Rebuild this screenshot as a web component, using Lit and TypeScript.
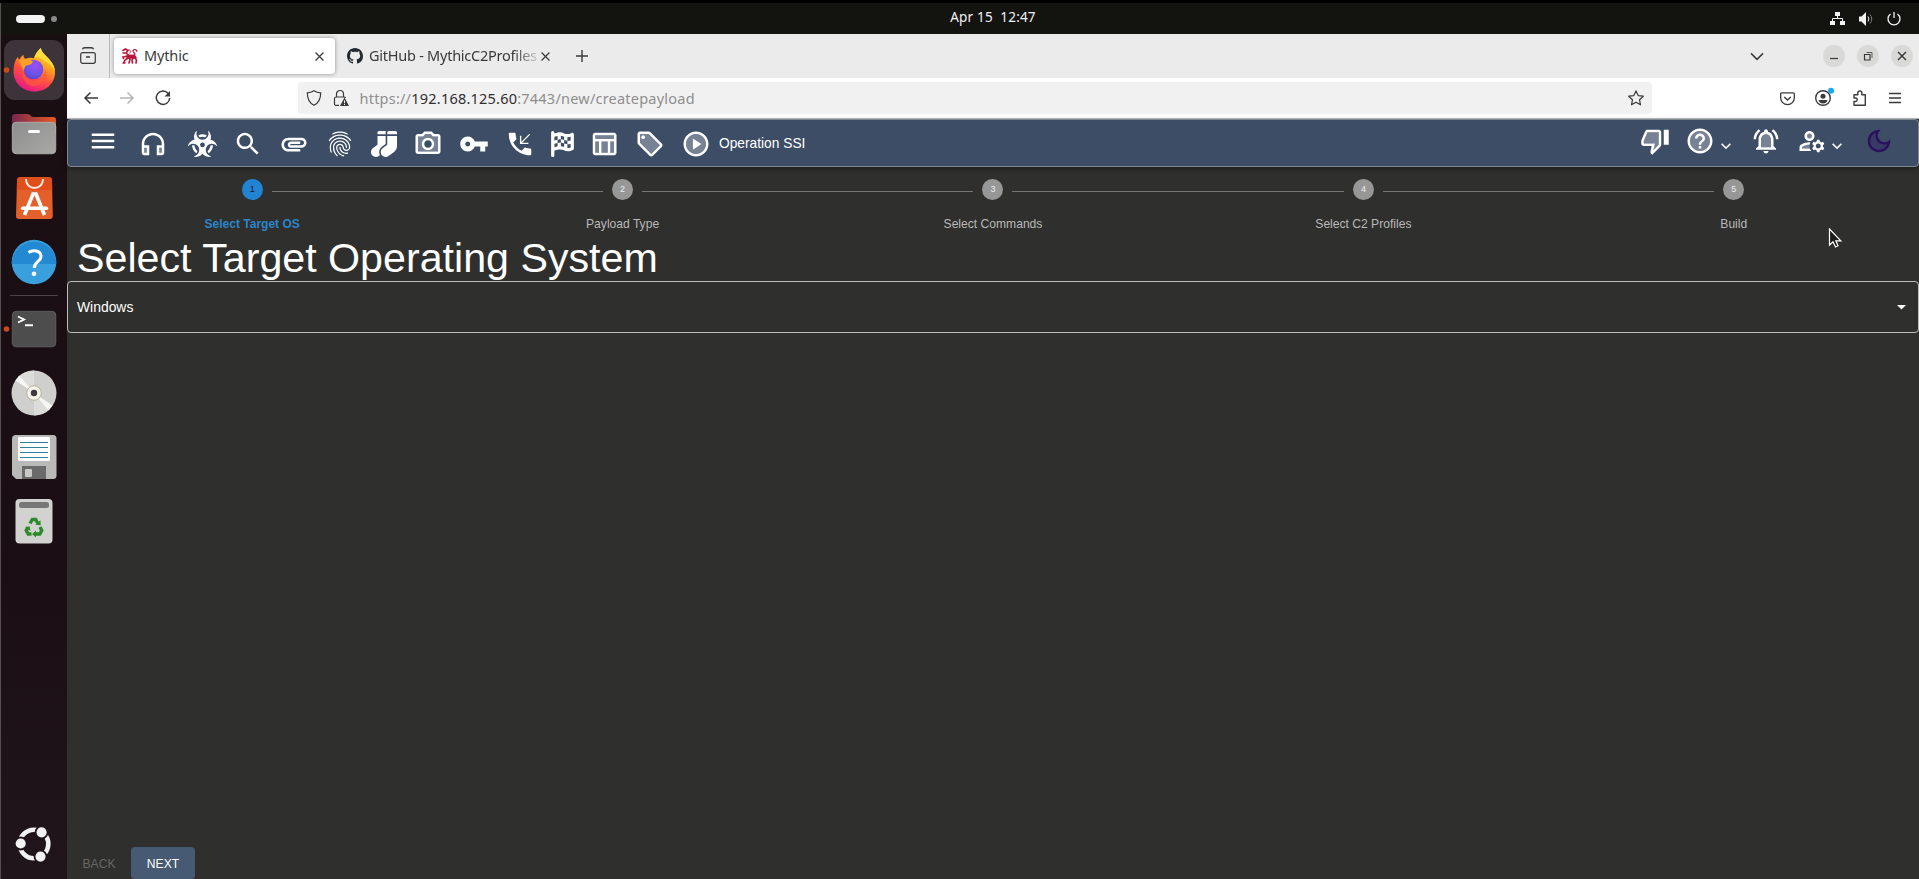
import { LitElement, html, svg, css, nothing } from "lit";
import { customElement } from "lit/decorators.js";

type Glyph = { vb: string; w: number; h: number; body: unknown };

const mui = (body: unknown, size = 30): Glyph => ({ vb: "0 0 24 24", w: size, h: size, body });

const draw = (g: Glyph) =>
  html`<svg viewBox=${g.vb} width=${g.w} height=${g.h} fill="currentColor">${g.body}</svg>`;

const duo = (soft: string, solid: string) => svg`<path opacity=".3" d=${soft}/><path d=${solid}/>`;

const icons = {
  menu: mui(svg`<path d="M3 18h18v-2H3v2zm0-5h18v-2H3v2zm0-7v2h18V6H3z"/>`),
  headphones: mui(duo("M5 15h2v4H5zM17 15h2v4h-2z", "M12 3c-4.97 0-9 4.03-9 9v7c0 1.1.9 2 2 2h4v-8H5v-1c0-3.87 3.13-7 7-7s7 3.13 7 7v1h-4v8h4c1.1 0 2-.9 2-2v-7c0-4.97-4.03-9-9-9zM7 15v4H5v-4h2zm12 4h-2v-4h2v4z")),
  biohazard: { vb: "0 0 576 512", w: 29, h: 26, body: svg`<path d="M287.9 112c18.6 0 36.2 3.8 52.8 9.6 13.3-10.3 23.6-24.3 29.5-40.7-25.2-10.9-53-17-82.2-17-29.1 0-56.9 6-82.1 16.9 5.9 16.4 16.2 30.4 29.5 40.7 16.5-5.7 34-9.5 52.5-9.5zM163.6 438.7c12-11.8 20.4-26.4 24.5-42.4-32.9-26.4-54.8-65.3-58.9-109.6-8.5-2.8-17.2-4.6-26.4-4.6-7.6 0-15.2 1-22.5 3.1 4.1 62.8 35.8 118 83.3 153.5zm224.2-42.6c4.1 16 12.5 30.7 24.5 42.5 47.4-35.5 79.1-90.7 83-153.5-7.2-2-14.7-3-22.2-3-9.2 0-18 1.9-26.6 4.7-4.1 44.2-26 82.9-58.7 109.3zm113.5-205c-17.6-10.4-36.3-16.6-55.3-19.9 6-17.7 10-36.4 10-56.2 0-41-14.5-80.8-41-112.2-2.5-3-6.6-3.7-10-1.8-3.3 1.9-4.8 6-3.6 9.7 4.5 13.8 6.6 26.3 6.6 38.5 0 67.8-53.8 122.9-120 122.9S168 117 168 49.2c0-12.1 2.2-24.7 6.6-38.5 1.2-3.7-.3-7.8-3.6-9.7-3.4-1.9-7.5-1.2-10 1.8C134.6 34.2 120 74 120 115c0 19.8 3.9 38.5 10 56.2-18.9 3.3-37.7 9.5-55.3 19.9-34.6 20.5-61 53.3-74.3 92.4-1.3 3.7.2 7.7 3.5 9.8 3.3 2 7.5 1.3 10-1.6 9.4-10.8 19-19.1 29.2-25.1 57.3-33.9 130.8-13.7 163.9 45 33.1 58.7 13.4 134-43.9 167.9-10.2 6.1-22 10.4-35.8 13.4-3.7.8-6.4 4.2-6.4 8.1.1 4 2.7 7.3 6.5 8 39.7 7.8 80.6.8 115.2-19.7 18-10.6 32.9-24.5 45.3-40.1 12.4 15.6 27.3 29.5 45.3 40.1 34.6 20.5 75.5 27.5 115.2 19.7 3.8-.7 6.4-4 6.5-8 0-3.9-2.6-7.3-6.4-8.1-13.9-2.9-25.6-7.3-35.8-13.4-57.3-33.9-77-109.2-43.9-167.9s106.6-78.9 163.9-45c10.2 6.1 19.8 14.3 29.2 25.1 2.5 2.9 6.7 3.6 10 1.6s4.8-6.1 3.5-9.8c-13.1-39.1-39.5-72-74.1-92.4zm-213.4 129c-26.5 0-48-21.5-48-48s21.5-48 48-48 48 21.5 48 48-21.5 48-48 48z"/>` },
  search: mui(svg`<path d="M15.5 14h-.79l-.28-.27C15.41 12.59 16 11.11 16 9.5 16 5.91 13.09 3 9.5 3S3 5.91 3 9.5 5.91 16 9.5 16c1.61 0 3.09-.59 4.23-1.57l.27.28v.79l5 4.99L20.49 19l-4.99-5zm-6 0C7.01 14 5 11.99 5 9.5S7.01 5 9.5 5 14 7.01 14 9.5 11.99 14 9.5 14z"/>`),
  clip: mui(svg`<path d="M2 12.5C2 9.46 4.46 7 7.5 7H18c2.21 0 4 1.79 4 4s-1.79 4-4 4H9.5C8.12 15 7 13.88 7 12.5S8.12 10 9.5 10H17v2H9.41c-.55 0-.55 1 0 1H18c1.1 0 2-.9 2-2s-.9-2-2-2H7.5C5.57 9 4 10.57 4 12.5S5.57 16 7.5 16H17v2H7.5C4.46 18 2 15.54 2 12.5z"/>`),
  fingerprint: mui(svg`<path d="M17.81 4.47c-.08 0-.16-.02-.23-.06C15.66 3.42 14 3 12.01 3c-1.98 0-3.86.47-5.57 1.41-.24.13-.54.04-.68-.2-.13-.24-.04-.55.2-.68C7.82 2.52 9.86 2 12.01 2c2.13 0 3.99.47 6.03 1.52.25.13.34.43.21.67-.09.18-.26.28-.44.28zM3.5 9.72c-.1 0-.2-.03-.29-.09-.23-.16-.28-.47-.12-.7.99-1.4 2.25-2.5 3.75-3.27C9.98 4.04 14 4.03 17.15 5.65c1.5.77 2.76 1.86 3.75 3.25.16.22.11.54-.12.7-.23.16-.54.11-.7-.12-.9-1.26-2.04-2.25-3.39-2.94-2.87-1.47-6.54-1.47-9.4.01-1.36.7-2.5 1.7-3.4 2.96-.08.14-.23.21-.39.21zm6.25 12.07c-.13 0-.26-.05-.35-.15-.87-.87-1.34-1.43-2.01-2.64-.69-1.23-1.05-2.73-1.05-4.34 0-2.97 2.54-5.39 5.66-5.39s5.66 2.42 5.66 5.39c0 .28-.22.5-.5.5s-.5-.22-.5-.5c0-2.42-2.09-4.39-4.66-4.39-2.57 0-4.66 1.97-4.66 4.39 0 1.44.32 2.77.93 3.85.64 1.15 1.08 1.64 1.85 2.42.19.2.19.51 0 .71-.11.1-.24.15-.37.15zm7.17-1.85c-1.19 0-2.24-.3-3.1-.89-1.49-1.01-2.38-2.65-2.38-4.39 0-.28.22-.5.5-.5s.5.22.5.5c0 1.41.72 2.74 1.94 3.56.71.48 1.54.71 2.54.71.24 0 .64-.03 1.04-.1.27-.05.53.13.58.41.05.27-.13.53-.41.58-.57.11-1.07.12-1.21.12zM14.91 22c-.04 0-.09-.01-.13-.02-1.59-.44-2.63-1.03-3.72-2.1-1.4-1.39-2.17-3.24-2.17-5.22 0-1.62 1.38-2.94 3.08-2.94 1.7 0 3.08 1.32 3.08 2.94 0 1.07.93 1.94 2.08 1.94s2.08-.87 2.08-1.94c0-3.77-3.25-6.83-7.25-6.83-2.84 0-5.44 1.58-6.61 4.03-.39.81-.59 1.76-.59 2.8 0 .78.07 2.01.67 3.61.1.26-.03.55-.29.64-.26.1-.55-.04-.64-.29-.49-1.31-.73-2.61-.73-3.96 0-1.2.23-2.29.68-3.24 1.33-2.79 4.28-4.6 7.51-4.6 4.55 0 8.25 3.51 8.25 7.83 0 1.62-1.38 2.94-3.08 2.94s-3.08-1.32-3.08-2.94c0-1.07-.93-1.94-2.08-1.94s-2.08.87-2.08 1.94c0 1.71.66 3.31 1.87 4.51.95.94 1.86 1.46 3.27 1.85.27.07.42.35.35.61-.05.23-.26.38-.47.38z"/>`),
  socks: { vb: "0 0 512 512", w: 26, h: 26, body: svg`<path d="M214.66 311.01L288 256V96H128v176l-86.65 64.61c-39.4 29.56-53.86 84.42-29.21 127.06C30.39 495.25 63.27 512 96.08 512c20.03 0 40.25-6.25 57.52-19.2l21.86-16.39c-29.85-55.38-13.54-125.84 39.2-165.4zM288 32c0-11.05 3.07-21.3 8.02-30.38C293.4.92 290.85 0 288 0H160c-17.67 0-32 14.33-32 32v32h160V32zM480 0H352c-17.67 0-32 14.33-32 32v32h192V32c0-17.67-14.33-32-32-32zM320 272l-86.13 64.61c-39.4 29.56-53.86 84.42-29.21 127.06 18.25 31.58 50.61 48.33 83.42 48.33 20.03 0 40.25-6.25 57.52-19.2l115.2-86.4A127.997 127.997 0 0 0 512 304V96H320v176z"/>` },
  camera: mui(duo("M20 6h-4.05l-1.83-2H9.88L8.05 6H4v12h16V6zm-8 11c-2.76 0-5-2.24-5-5s2.24-5 5-5 5 2.24 5 5-2.24 5-5 5z", "M20 4h-3.17L15 2H9L7.17 4H4c-1.1 0-2 .9-2 2v12c0 1.1.9 2 2 2h16c1.1 0 2-.9 2-2V6c0-1.1-.9-2-2-2zm0 14H4V6h4.05l1.83-2h4.24l1.83 2H20v12zM12 7c-2.76 0-5 2.24-5 5s2.24 5 5 5 5-2.24 5-5-2.24-5-5-5zm0 8c-1.65 0-3-1.35-3-3s1.35-3 3-3 3 1.35 3 3-1.35 3-3 3z")),
  key: mui(svg`<path d="M12.65 10C11.83 7.67 9.61 6 7 6c-3.31 0-6 2.69-6 6s2.69 6 6 6c2.61 0 4.83-1.67 5.65-4H17v4h4v-4h2v-4H12.65zM7 14c-1.1 0-2-.9-2-2s.9-2 2-2 2 .9 2 2-.9 2-2 2z"/>`),
  phone: mui(svg`<path d="M20 15.5c-1.25 0-2.45-.2-3.57-.57-.35-.11-.74-.03-1.02.24l-2.2 2.2c-2.83-1.44-5.15-3.75-6.59-6.58l2.2-2.21c.28-.27.36-.66.25-1.01C8.7 6.45 8.5 5.25 8.5 4c0-.55-.45-1-1-1H4c-.55 0-1 .45-1 1 0 9.39 7.61 17 17 17 .55 0 1-.45 1-1v-3.5c0-.55-.45-1-1-1z"/><path d="M12.5 5.3v6.2h6.2M12.9 11.1 19.7 4.3" fill="none" stroke="currentColor" stroke-width="1.1"/>`),
  flag: { vb: "0 0 448 512", w: 23, h: 26, body: svg`<path d="M32 0C49.7 0 64 14.3 64 32V48l69-17.2c38.1-9.5 78.3-5.1 113.5 12.5c46.3 23.2 100.8 23.2 147.1 0l9.6-4.8C423.8 28.1 448 43.1 448 66.1V345.8c0 13.3-8.3 25.3-20.8 30l-34.7 13c-46.2 17.3-97.6 14.6-141.7-7.4c-37.9-19-81.3-23.7-122.5-13.4L64 384v96c0 17.7-14.3 32-32 32s-32-14.3-32-32V400 334 64 32C0 14.3 14.3 0 32 0zM64 187.1l64-13.9v65.5L64 252.6V318l48.8-12.2c5.1-1.3 10.1-2.4 15.2-3.3V238.7l38.9-8.4c8.3-1.8 16.7-2.5 25.1-2.1l0-64c13.6 .4 27.2 2.6 40.4 6.4l23.6 6.9v66.7l-41.7-12.3c-7.3-2.1-14.8-3.4-22.3-3.8v71.4c21.8 1.9 43.3 6.7 64 14.4V244.2l22.7 6.7c13.5 4 27.3 6.4 41.3 7.4V194c-7.8-.8-15.6-2.3-23.2-4.5l-40.8-12v-62c-13-3.8-25.8-8.8-38.2-15c-8.2-4.1-16.9-7-25.8-8.8v72.4c-13-.4-26 .8-38.7 3.6L128 173.2V98L64 114v73.1zM320 335.7c16.8 1.5 33.9-.7 50-6.8l14-5.2V251.9l-7.9 1.8c-18.4 4.3-37.3 5.7-56.1 4.5v77.4zm64-149.4V115.4c-20.9 6.1-42.4 9.1-64 9.1V194c13.9 1.4 28 .5 41.7-2.6l22.3-5.2z"/>` },
  table: mui(duo("M5 10h3v9H5zm12 0h3v9h-3zM5 5h15v3H5zm5 5h5v9h-5z", "M20 3H5c-1.1 0-2 .9-2 2v14c0 1.1.9 2 2 2h15c1.1 0 2-.9 2-2V5c0-1.1-.9-2-2-2zm0 2v3H5V5h15zm-5 14h-5v-9h5v9zM5 10h3v9H5v-9zm12 9v-9h3v9h-3z")),
  tag: mui(svg`${duo("M11 4H4v7l9 9.01L20 13l-9-9zM6.5 8C5.67 8 5 7.33 5 6.5S5.67 5 6.5 5 8 5.67 8 6.5 7.33 8 6.5 8z", "M21.41 11.58l-9-9C12.05 2.22 11.55 2 11 2H4c-1.1 0-2 .9-2 2v7c0 .55.22 1.05.59 1.42l9 9c.36.36.86.58 1.41.58s1.05-.22 1.41-.59l7-7c.37-.36.59-.86.59-1.41s-.23-1.06-.59-1.42zM13 20.01L4 11V4h7v-.01l9 9-7 7.02z")}<circle cx="6.5" cy="6.5" r="1.5"/>`),
  play: mui(duo("M12 4c-4.41 0-8 3.59-8 8s3.59 8 8 8 8-3.59 8-8-3.59-8-8-8zM9.5 16.5v-9l7 4.5z", "M12 2C6.48 2 2 6.48 2 12s4.48 10 10 10 10-4.48 10-10S17.52 2 12 2zm0 18c-4.41 0-8-3.59-8-8s3.59-8 8-8 8 3.59 8 8-3.59 8-8 8zM9.5 7.5v9l7-4.5z")),
  thumb: mui(duo("M3 12v2h9l-1.34 5.34L15 15V5H6z", "M15 3H6c-.83 0-1.54.5-1.84 1.22l-3.02 7.05c-.09.23-.14.47-.14.73v2c0 1.1.9 2 2 2h6.31l-.95 4.57-.03.32c0 .41.17.79.44 1.06L9.83 23l6.59-6.59c.36-.36.58-.86.58-1.41V5c0-1.1-.9-2-2-2zm0 12l-4.34 4.34L12 14H3v-2l3-7h9v10zm4-12h4v12h-4z")),
  help: mui(duo("M12 4c-4.41 0-8 3.59-8 8s3.59 8 8 8 8-3.59 8-8-3.59-8-8-8z", "M11 16h2v2h-2zm1-14C6.48 2 2 6.48 2 12s4.48 10 10 10 10-4.48 10-10S17.52 2 12 2zm0 18c-4.41 0-8-3.59-8-8s3.59-8 8-8 8 3.59 8 8-3.59 8-8 8zm0-14c-2.21 0-4 1.79-4 4h2c0-1.1.9-2 2-2s2 .9 2 2c0 2-3 1.75-3 5h2c0-2.25 3-2.5 3-5 0-2.21-1.79-4-4-4z")),
  bell: mui(duo("M12 6.5c-2.49 0-4 2.02-4 4.5v6h8v-6c0-2.48-1.51-4.5-4-4.5z", "M12 22c1.1 0 2-.9 2-2h-4c0 1.1.9 2 2 2zm6-6v-5c0-3.07-1.63-5.64-4.5-6.32V4c0-.83-.67-1.5-1.5-1.5s-1.5.67-1.5 1.5v.68C7.64 5.36 6 7.92 6 11v5l-2 2v1h16v-1l-2-2zm-2 1H8v-6c0-2.48 1.51-4.5 4-4.5s4 2.02 4 4.5v6zM7.58 4.08L6.15 2.65C3.75 4.48 2.17 7.3 2.03 10.5h2c.15-2.65 1.51-4.97 3.55-6.42zm12.39 6.42h2c-.15-3.2-1.73-6.02-4.12-7.85l-1.42 1.43c2.02 1.45 3.39 3.77 3.54 6.42z")),
  account: mui(duo("M10 15c-1.97 0-3.9.53-5.59 1.54-.25.15-.41.47-.41.81V18h6.29c-.2-.64-.29-1.3-.29-2 0-.34.03-.67.08-.99zM8 8a2 2 0 1 0 4 0 2 2 0 1 0-4 0z", "M4 18v-.65c0-.34.16-.66.41-.81C6.1 15.53 8.03 15 10 15c.03 0 .05 0 .08.01.1-.7.3-1.37.59-1.98-.22-.02-.44-.03-.67-.03-2.42 0-4.68.67-6.61 1.82-.88.52-1.39 1.5-1.39 2.53V20h9.26c-.42-.6-.75-1.28-.97-2H4zm6-6c2.21 0 4-1.79 4-4s-1.79-4-4-4-4 1.79-4 4 1.79 4 4 4zm0-6c1.1 0 2 .9 2 2s-.9 2-2 2-2-.9-2-2 .9-2 2-2zm10.75 10c0-.22-.03-.42-.06-.63l1.14-1.01-1-1.73-1.45.49c-.32-.27-.68-.48-1.08-.63L18 11h-2l-.3 1.49c-.4.15-.76.36-1.08.63l-1.45-.49-1 1.73 1.14 1.01c-.03.21-.06.41-.06.63s.03.42.06.63l-1.14 1.01 1 1.73 1.45-.49c.32.27.68.48 1.08.63L16 21h2l.3-1.49c.4-.15.76-.36 1.08-.63l1.45.49 1-1.73-1.14-1.01c.03-.21.06-.41.06-.63zM17 18c-1.1 0-2-.9-2-2s.9-2 2-2 2 .9 2 2-.9 2-2 2z")),
  chevron: mui(svg`<path d="M7.41 8.59 12 13.17l4.59-4.58L18 10l-6 6-6-6z"/>`, 20),
  moon: mui(duo("M9.37 5.51C6.81 6.55 5 9.07 5 12c0 3.86 3.14 7 7 7 2.93 0 5.45-1.81 6.49-4.37-.64.18-1.31.27-1.99.27-4.08 0-7.4-3.32-7.4-7.4 0-.68.09-1.35.27-1.99z", "M9.37 5.51c-.18.64-.27 1.31-.27 1.99 0 4.08 3.32 7.4 7.4 7.4.68 0 1.35-.09 1.99-.27C17.45 17.19 14.93 19 12 19c-3.86 0-7-3.14-7-7 0-2.93 1.81-5.45 4.37-6.49zM12 3c-4.97 0-9 4.03-9 9s4.03 9 9 9 9-4.03 9-9c0-.46-.04-.92-.1-1.36-.98 1.37-2.58 2.26-4.4 2.26-2.98 0-5.4-2.42-5.4-5.4 0-1.81.89-3.42 2.26-4.4-.44-.06-.9-.1-1.36-.1z")),
};

@customElement("gnome-dock")
class GnomeDock extends LitElement {
  static styles = css`
    :host { display: flex; flex-direction: column; flex: none; width: 67px; box-sizing: border-box; padding: 4px 0 3px; border-left: 1px solid #55504f;
      background: linear-gradient(#190e12, #1b0f15 65%, #20151b); }
    .cell { flex: none; width: 66px; height: 64px; display: block; }
    .rule { flex: none; height: 1px; margin: 1px 9px; background: #4b4346; }
    .grow { flex: 1; }
  `;
  cell(body: unknown) {
    return html`<svg class="cell" viewBox="0 0 66 64">${body}</svg>`;
  }
  render() {
    return html`
      ${this.cell(svg`
        <defs>
          <linearGradient id="fx" x1=".8" y1="0" x2=".3" y2="1"><stop offset="0" stop-color="#fff44f"/><stop offset=".35" stop-color="#ffa41c"/><stop offset=".65" stop-color="#ff4a45"/><stop offset="1" stop-color="#e6168a"/></linearGradient>
          <radialGradient id="globe" cx=".6" cy=".3" r=".8"><stop offset="0" stop-color="#a04df0"/><stop offset=".6" stop-color="#6a52ea"/><stop offset="1" stop-color="#5b3fc4"/></radialGradient>
        </defs>
        <rect x="3" y="2" width="60" height="60" rx="11" fill="#3d3439"/>
        <circle cx="5.5" cy="32" r="2.8" fill="#cc4a1c"/>
        <path d="M12.500 33c0-8 3-13 4.500-14 .3 1.500.8 2.500 1.200 3 1-2.500 3-4.600 4.300-5 0 2 .6 3.200 1.800 4.200 3-1.700 6.500-1.700 8.700-.9 1-4 3.700-7.500 6.800-10.300.5 3.800 3.200 6 6.800 9.500 3.200 3.300 6.800 7.500 7.400 13.500C54.500 44.500 46 53.500 33.500 53.500S12.500 44.500 12.500 33z" fill="url(#fx)"/>
        <path d="M39.800 10c.5 3.800 3.200 6 6.800 9.500 3.200 3.300 6.800 7.500 7.400 13.500-2-6-9-9-13-12-3-2-6.500-2.500-8-.7 1-4 3.700-7.500 6.800-10.300z" fill="#ffe03c" opacity=".85"/>
        <circle cx="32.5" cy="31.5" r="9.8" fill="url(#globe)"/>
        <path d="M18 22c4-3 10-1 14 1.500-1 3-4 3.500-6.500 4-2 1-1.500 2.500-3 5-2-4-3.500-8-4.500-10.500z" fill="#ff9e28"/>
        <path d="M22 30c0 8 5 12.500 11.500 12.500S44 38 44 31c4 8-1 17-11 17S20 38 22 30z" fill="#ff5a3c" opacity=".7"/>`)}
      ${this.cell(svg`
        <defs><linearGradient id="fo" x1="0" x2="1"><stop offset="0" stop-color="#79284f"/><stop offset="1" stop-color="#e55b22"/></linearGradient>
        <linearGradient id="fg" x1="0" y1="0" x2="1" y2="1"><stop offset="0" stop-color="#8d8d8d"/><stop offset="1" stop-color="#a9a9a8"/></linearGradient></defs>
        <path d="M11 15a3 3 0 0 1 3-3h13c2 0 3 3 5 3h20a3 3 0 0 1 3 3v14H11z" fill="url(#fo)"/>
        <rect x="11.3" y="20.3" width="43.5" height="31.5" rx="4" fill="url(#fg)" stroke="#b5b5b3" stroke-width=".8"/>
        <rect x="27" y="28" width="12" height="3" rx="1.5" fill="#fff"/>`)}
      ${this.cell(svg`
        <path d="M19 13h29a3 3 0 0 1 3 3l.8 34a3 3 0 0 1-3 3H18a3 3 0 0 1-3-3l1-34a3 3 0 0 1 3-3z" fill="#e4602a"/>
        <path d="M19 11h29a3 3 0 0 1 3 3l.2 10H15.800l.2-10a3 3 0 0 1 3-3z" fill="#e04e1c"/>
        <path d="M25 13c0 12 17 12 17 0" fill="none" stroke="#ffe9df" stroke-width="1.8"/>
        <path d="M23.500 49 32 28h3l8.500 21" fill="none" stroke="#fff" stroke-width="3.6"/>
        <path d="M21.500 42.300h24" stroke="#fff" stroke-width="3.4" stroke-linecap="round"/>`)}
      ${this.cell(svg`
        <circle cx="33" cy="32" r="22.3" fill="#3a9fdd"/><path d="M10.700 34a22.300 22.300 0 0 1 44.600 0z" fill="#2389d3"/>
        <path d="M27.500 22.500c4-3 12.500-2.500 12.500 4 0 5-6.700 5-6.700 11.500" fill="none" stroke="#fff" stroke-width="3"/><circle cx="33" cy="43.8" r="2.3" fill="#fff"/>`)}
      <div class="rule"></div>
      ${this.cell(svg`
        <circle cx="5.5" cy="32" r="2.8" fill="#cc4a1c"/>
        <rect x="11.3" y="14.3" width="43.5" height="35.5" rx="4" fill="#4d4d4d" stroke="#676767" stroke-width=".8"/>
        <path d="M17 19.500l6 3-6 3M24 28.300h8" fill="none" stroke="#fff" stroke-width="1.9"/>`)}
      ${this.cell(svg`
        <circle cx="33" cy="32" r="22.5" fill="#cfcfcd"/>
        <path d="M33 32 17 16a22.500 22.500 0 0 1 16-6.500zM33 32l16 16a22.500 22.500 0 0 1-16 6.500z" fill="#dcdcda"/>
        <path d="M33 32 14.500 19.500l4-5zM33 32l18.500 12.500-4 5z" fill="#f6f6f2"/>
        <circle cx="33" cy="32" r="7.3" fill="#f4f3ec" stroke="#b3a98c" stroke-width=".9"/><circle cx="33" cy="32" r="3.2" fill="#3c3c3c"/>`)}
      ${this.cell(svg`
        <path d="M15 10h37a3.500 3.500 0 0 1 3.500 3.500v37A3.500 3.500 0 0 1 52 54H15l-4-4V14a4 4 0 0 1 4-4z" fill="#b9b9b7"/>
        <rect x="17" y="12" width="32" height="24" rx="1" fill="#fff"/>
        <path d="M19 17.500h28M19 22.500h28M19 27.500h28M19 32.500h28" stroke="#2f7f99" stroke-width="1.1"/>
        <rect x="21" y="41" width="24" height="13" fill="#6a6a6a"/><rect x="24" y="44" width="7" height="8" rx="1" fill="#c9c9c7"/>`)}
      ${this.cell(svg`
        <rect x="14.5" y="10" width="37" height="44.5" rx="4" fill="#d2d2d0"/><rect x="18" y="13" width="30" height="6" rx="2.5" fill="#777"/>
        <g fill="none" stroke="#2c8a2a" stroke-width="3.4"><path d="M29 34.500l2.300-4h3.400l2 3.500"/><path d="M39 38l1.800 3.400-2 3.600H34.500"/><path d="M30.500 45h-3.300l-2-3.600 1.800-3"/></g>
        <path d="M34.200 35.800l5.500.4-.2-5zM35 41.500v7l-4-3.500zM24 38.200l4.600-.9.900 4.700z" fill="#2c8a2a"/>`)}
      <div class="grow"></div>
      ${this.cell(svg`
        <circle cx="33" cy="32" r="14.3" fill="none" stroke="#f2f2f2" stroke-width="4.6"/>
        <g fill="#f2f2f2" stroke="#1f141a" stroke-width="1.8"><circle cx="19.7" cy="31.5" r="6"/><circle cx="40.6" cy="20.3" r="6"/><circle cx="39.5" cy="44.6" r="6"/></g>`)}
    `;
  }
}

@customElement("browser-chrome")
class BrowserChrome extends LitElement {
  static styles = css`
    :host { display: block; font: 14.5px "Noto Sans", sans-serif; color: #3a3a3a; }
    svg { display: block; flex: none; overflow: visible; }
    .tabs { display: flex; align-items: center; height: 44px; background: #eaebea; }
    .view { width: 42px; height: 44px; border-right: 1px solid #b9b9b9; display: grid; place-items: center; box-sizing: content-box; padding-right: 0; }
    .tab { display: flex; align-items: center; box-sizing: border-box; height: 36px; border-radius: 4px; }
    .on { width: 221px; margin-left: 4px; padding: 0 11px 0 8px; background: #fff; box-shadow: 0 0 4px rgba(0,0,0,.4); }
    .off { width: 221px; margin-left: 4px; padding: 0 10px 0 8px; }
    .name { margin-left: 6px; flex: 1; white-space: nowrap; overflow: hidden; padding-bottom: 2px; }
    .first { letter-spacing: -.15px; }
    .second { letter-spacing: -.25px; -webkit-mask: linear-gradient(90deg, #000 84%, transparent 101%); mask: linear-gradient(90deg, #000 84%, transparent 101%); }
    .plus { margin-left: 16px; }
    .grow { flex: 1; }
    .caret { margin-right: 60px; }
    .win { width: 22px; height: 22px; border-radius: 50%; background: #d9d9d8; display: grid; place-items: center; margin-right: 12px; }
    .win.last { margin-right: 6px; }
    .bar { display: flex; align-items: center; height: 40px; background: #fff; border-bottom: 1px solid #bcbfc0; }
    .back { margin-left: 16px; } .fwd { margin-left: 20px; } .reload { margin-left: 20px; }
    .url { display: flex; align-items: center; flex: none; box-sizing: border-box; width: 1354px; height: 32px; margin-left: 127px; padding: 0 8px; border-radius: 4px; background: #f1f1f1; }
    .lock { margin-left: 11px; }
    .addr { margin-left: 10.5px; flex: 1; color: #8e8e8e; white-space: nowrap; letter-spacing: .22px; padding-bottom: 1px; }
    .addr b { font-weight: 400; color: #2f2f2f; }
    .pocket { margin-left: 127.5px; } .acct { margin-left: 20.5px; } .ext { margin-left: 20.5px; } .burger { margin-left: 21.5px; }
  `;
  render() {
    const s = (w: number, body: unknown, cls = "") => html`<svg class=${cls} width=${w} height=${w} viewBox="0 0 16 16" fill="none" stroke="#3a3a3a" stroke-width="1.2">${body}</svg>`;
    return html`
      <div class="tabs">
        <div class="view">${s(16, svg`<rect x=".7" y="4.7" width="14.6" height="10.6" rx="2"/><path d="M2.500 1.200Q3-.3 4.500-.3h7q1.500 0 2 1.500M6 9h4" stroke-width="1.4"/>`)}</div>
        <div class="tab on">
          <svg width="16" height="16" viewBox="0 0 16 16" fill="none" stroke="#b8173a" stroke-width="1.6" stroke-linecap="round">
            <path d="M1 2.500 3.500 1l2.500 1.500L4 5l3 2.500h5l2 2M3 5H1M5 8l-4 1 .5 1.500M6 10l-3 2-1.500 3H3M7.500 9.500l.5 2-1 3.500M12 9l-2 3 .5 3M13 10l1.500 2-.5 3"/><path d="M6 7.500h6.500v2.500H5z" fill="#b8173a"/><path d="M12 7.500c3-2-2-3-1-5s4-.5 4 1" stroke-width="1.2"/><path d="M7 1.500 9 3.500 7.500 5" stroke-width="1"/>
          </svg>
          <span class="name first">Mythic</span>
          ${s(9, svg`<path stroke-width="2.2" d="M1 1l14 14M15 1 1 15"/>`)}
        </div>
        <div class="tab off">
          <svg width="16" height="16" viewBox="0 0 16 16" fill="#24292f"><path d="M8 0C3.580 0 0 3.580 0 8c0 3.540 2.290 6.530 5.470 7.590.4.07.55-.17.55-.38 0-.19-.01-.82-.01-1.490-2.010.37-2.530-.49-2.690-.94-.09-.23-.48-.94-.82-1.130-.28-.15-.68-.52-.01-.53.63-.01 1.080.58 1.230.82.72 1.210 1.870.87 2.330.66.07-.52.28-.87.51-1.070-1.780-.2-3.640-.89-3.640-3.950 0-.87.31-1.590.82-2.150-.08-.2-.36-1.020.08-2.120 0 0 .67-.21 2.200.82.64-.18 1.320-.27 2-.27s1.360.09 2 .27c1.530-1.040 2.200-.82 2.200-.82.44 1.100.16 1.920.08 2.120.51.56.82 1.270.82 2.150 0 3.070-1.870 3.750-3.650 3.950.29.25.54.73.54 1.480 0 1.070-.01 1.930-.01 2.200 0 .21.15.46.55.38A8.010 8.010 0 0 0 16 8c0-4.420-3.580-8-8-8z"/></svg>
          <span class="name second">GitHub - MythicC2Profiles</span>
          ${s(9, svg`<path stroke-width="2.2" d="M1 1l14 14M15 1 1 15"/>`)}
        </div>
        ${s(12, svg`<path stroke-width="1.9" d="M8 0v16M0 8h16"/>`, "plus")}
        <div class="grow"></div>
        ${s(12, svg`<path stroke-width="2" d="M0 4.500l8 8 8-8"/>`, "caret")}
        <div class="win">${s(8, svg`<path stroke-width="2.4" d="M0 13h16"/>`)}</div>
        <div class="win">${s(8, svg`<path stroke-width="2.4" d="M1 5h11v11H1z"/><path stroke-width="1.6" d="M5 1h11v11"/>`)}</div>
        <div class="win last">${s(8, svg`<path stroke-width="3" d="M0 0l16 16M16 0 0 16"/>`)}</div>
      </div>
      <div class="bar">
        ${s(16, svg`<path stroke-width="1.5" d="M15 8H2M7.500 2.500 2 8l5.500 5.500"/>`, "back")}
        <svg class="fwd" width="16" height="16" viewBox="0 0 16 16" fill="none" stroke="#b4b4b4" stroke-width="1.5"><path d="M1 8h13M8.500 2.500 14 8l-5.500 5.500"/></svg>
        ${s(16, svg`<path stroke-width="1.5" d="M13.200 3.500A6.700 6.700 0 1 0 14.700 8"/><path fill="#3a3a3a" stroke="none" d="M15 1v5.500H9.500z"/>`, "reload")}
        <div class="url">
          ${s(16, svg`<path d="M8 .8c2 1.300 4.500 2 6.700 2C14.700 9 13 13 8 15.300 3 13 1.300 9 1.300 2.800 3.500 2.800 6 2.100 8 .8z"/>`, "shield")}
          ${s(16, svg`<path d="M6 15.300H3a1.500 1.500 0 0 1-1.500-1.500V8.500A1.500 1.500 0 0 1 3 7h8a1.500 1.500 0 0 1 1.500 1M3.500 7V4a3.500 3.500 0 0 1 7 0v3"/><path fill="#3a3a3a" stroke="none" d="M11.500 7.500 16 16H7z"/><path stroke="#fff" stroke-width="1" d="M11.500 10.500v2.700M11.500 14v1"/>`, "lock")}
          <span class="addr">https://<b>192.168.125.60</b>:7443/new/createpayload</span>
          ${s(16, svg`<path d="M8 .9l2.200 4.700 5.100.6-3.800 3.500 1 5.100L8 12.300l-4.500 2.500 1-5.100L.7 6.200l5.100-.6z" stroke-linejoin="round"/>`, "star")}
        </div>
        ${s(15, svg`<path d="M2 2h12a1.300 1.300 0 0 1 1.300 1.300v3.900a7.300 7.300 0 0 1-14.600 0V3.300A1.300 1.300 0 0 1 2 2zM4.500 6.500 8 9.700l3.500-3.200" stroke-width="1.4"/>`, "pocket")}
        ${s(16, svg`<circle cx="8" cy="8" r="7.3" stroke-width="1.4"/><circle cx="8" cy="6.3" r="2.5" fill="#3a3a3a" stroke="none"/><path d="M3.500 10h9q-1 3.500-4.500 3.500T3.500 10z" fill="#3a3a3a" stroke="none"/><circle cx="16" cy=".8" r="3" fill="#1aa9f0" stroke="none"/>`, "acct")}
        ${s(16, svg`<path d="M2 4.700h3.800V3a2 2 0 0 1 4 0v1.700h3.500v10.500H2V11.500h1.500a1.700 1.700 0 0 0 0-3.500H2z" stroke-width="1.4" stroke-linejoin="round"/>`, "ext")}
        ${s(12, svg`<path stroke-width="1.8" d="M0 2h16M0 8h16M0 14h16"/>`, "burger")}
      </div>
    `;
  }
}

type Item = { icon: keyof typeof icons; gap: number; tone?: string };

@customElement("mythic-bar")
class MythicBar extends LitElement {
  static styles = css`
    :host { display: flex; align-items: center; flex: none; box-sizing: border-box; height: 48px; padding: 1px 24px 0 20px; border: 1px solid #838990; border-radius: 4px;
      background: #3d4d66; color: #fff; box-shadow: 0 2px 5px rgba(0,0,0,.4); font: 13.75px "Liberation Sans", Arial, sans-serif; position: relative; }
    svg { display: block; flex: none; }
    .high { margin-bottom: 5px; }
    .low { margin-bottom: -5px; }
    .night { color: #2b1060; }
    .op { margin-left: 8px; line-height: 20px; }
    .grow { flex: 1; }
    .item { flex: none; }
  `;
  left: Item[] = [
    { icon: "menu", gap: 0, tone: "high" }, { icon: "headphones", gap: 20 }, { icon: "biohazard", gap: 20 }, { icon: "search", gap: 16 },
    { icon: "clip", gap: 16 }, { icon: "fingerprint", gap: 16 }, { icon: "socks", gap: 16 }, { icon: "camera", gap: 16 }, { icon: "key", gap: 16 },
    { icon: "phone", gap: 16 }, { icon: "flag", gap: 16 }, { icon: "table", gap: 15 }, { icon: "tag", gap: 16 }, { icon: "play", gap: 16 },
  ];
  right: Item[] = [
    { icon: "thumb", gap: 0, tone: "high" }, { icon: "help", gap: 15.5, tone: "high" }, { icon: "chevron", gap: 0.5, tone: "low" },
    { icon: "bell", gap: 15, tone: "high" }, { icon: "account", gap: 16, tone: "high" }, { icon: "chevron", gap: 0.5, tone: "low" }, { icon: "moon", gap: 17, tone: "high night" },
  ];
  row(items: Item[]) {
    return items.map((i) => html`<div class="item ${i.tone ?? ""}" style="margin-left:${i.gap}px">${draw(icons[i.icon])}</div>`);
  }
  render() {
    return html`${this.row(this.left)}<span class="op">Operation SSI</span><div class="grow"></div>${this.row(this.right)}`;
  }
}

@customElement("app-root")
class AppRoot extends LitElement {
  static styles = css`
    :host { display: flex; flex-direction: column; width: 1919px; height: 879px; overflow: hidden; background: #2f2f2d; border-top: 3px solid #000; box-sizing: border-box; position: relative; color: #fff; font-family: "Liberation Sans", Arial, sans-serif; }
    .top { flex: none; display: grid; grid-template-columns: 1fr auto 1fr; align-items: center; height: 31px; box-sizing: border-box; border-left: 1px solid #55504f; background: #131310; color: #f2f2f2; font: 13.5px "Noto Sans", sans-serif; }
    .spaces { display: flex; align-items: center; gap: 6px; padding-left: 15px; }
    .pill { width: 29px; height: 8px; border-radius: 4px; background: #f4f4f4; }
    .dot { width: 6px; height: 6px; border-radius: 50%; background: #8a8a8a; }
    .clock { white-space: pre; padding: 0 0 3px 66px; letter-spacing: .2px; }
    .sys { display: flex; align-items: center; justify-content: flex-end; gap: 14px; padding-right: 18px; }
    .main { flex: 1; display: flex; min-height: 0; }
    .window { flex: 1; display: flex; flex-direction: column; min-width: 0; }
    .steps { display: grid; flex: none; grid-template-columns: repeat(5, 1fr); height: 70px; box-sizing: border-box; padding-top: 12px; font-size: 12.1px; color: #b9b9b8; }
    .step { display: grid; grid-template-columns: 1fr 21px 1fr; grid-template-rows: 21px 17px 14px; }
    .num { grid-column: 2; grid-row: 1; width: 21px; height: 21px; border-radius: 50%; background: #979797; color: #eee; font-size: 9px; line-height: 21px; text-align: center; }
    .line { grid-row: 1; height: 1px; margin-top: 12px; background: #767676; }
    .pre { grid-column: 1; margin-right: 9px; }
    .post { grid-column: 3; margin-left: 9px; }
    .label { grid-column: 1 / 4; grid-row: 3; text-align: center; line-height: 14px; }
    .active .num { background: #2183d2; color: #10202e; }
    .active .label { color: #2b85c9; font-weight: 700; font-size: 12px; }
    .title { font-size: 41.2px; line-height: 42px; height: 44px; padding-left: 10px; font-weight: 400; margin: 0; white-space: nowrap; }
    .select { display: flex; flex: none; align-items: center; justify-content: space-between; height: 52px; box-sizing: border-box; border: 1px solid #bdbdbc; border-radius: 4px; padding: 0 12px 0 9px; font-size: 13.9px; }
    .grow { flex: 1; }
    .actions { display: flex; flex: none; height: 32px; font-size: 12.1px; }
    .btn { display: flex; align-items: center; justify-content: center; box-sizing: border-box; padding-top: 1px; width: 64px; height: 32px; border-radius: 4px; }
    .back { color: #676765; }
    .next { background: #465b73; }
    .cursor { position: absolute; left: 1828px; top: 225px; }
  `;
  steps = ["Select Target OS", "Payload Type", "Select Commands", "Select C2 Profiles", "Build"];
  render() {
    return html`
      <div class="top">
        <div class="spaces"><div class="pill"></div><div class="dot"></div></div>
        <div class="clock">Apr 15  12:47</div>
        <div class="sys">
          <svg width="15" height="14" viewBox="0 0 15 14" fill="#f2f2f2"><path d="M5 0h5v4H5zM0 9h5v4H0zM10 9h5v4h-5z"/><path d="M7.500 4v3M2.500 9V6.500h10V9" fill="none" stroke="#f2f2f2"/></svg>
          <svg width="14" height="14" viewBox="0 0 14 14"><path d="M0 4.500h2.500L7 0v14L2.500 9.500H0z" fill="#f2f2f2"/><path d="M9 4.500q1.800 2.500 0 5" fill="none" stroke="#f2f2f2"/><path d="M11 2.500q3.500 4.500 0 9" fill="none" stroke="#777"/></svg>
          <svg width="14" height="14" viewBox="0 0 14 14" fill="none" stroke="#f2f2f2" stroke-width="1.3"><path d="M3.500 2A6 6 0 1 0 10.500 2M7 0v6"/></svg>
        </div>
      </div>
      <div class="main">
        <gnome-dock></gnome-dock>
        <div class="window">
          <browser-chrome></browser-chrome>
          <mythic-bar></mythic-bar>
          <div class="steps">
            ${this.steps.map((name, i) => html`
              <div class="step ${i === 0 ? "active" : ""}">
                ${i > 0 ? html`<div class="line pre"></div>` : nothing}
                <div class="num">${i + 1}</div>
                ${i < 4 ? html`<div class="line post"></div>` : nothing}
                <div class="label">${name}</div>
              </div>`)}
          </div>
          <h3 class="title">Select Target Operating System</h3>
          <div class="select">Windows<svg width="9" height="5" viewBox="0 0 9 5"><path d="M0 0h9L4.500 4.500z" fill="#fff"/></svg></div>
          <div class="grow"></div>
          <div class="actions"><div class="btn back">BACK</div><div class="btn next">NEXT</div></div>
        </div>
      </div>
      <svg class="cursor" width="14" height="20" viewBox="0 0 14 20"><path d="M1.500 1v16l3.500-3.300L7.500 19l2.500-1.200-2.200-5h5z" fill="#1c1c1c" stroke="#fff" stroke-width="1.2"/></svg>
    `;
  }
}
